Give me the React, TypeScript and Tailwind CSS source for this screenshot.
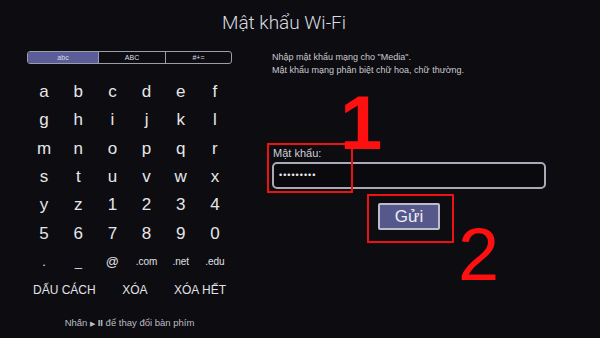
import React from "react";

const rows: string[][] = [
  ["a", "b", "c", "d", "e", "f"],
  ["g", "h", "i", "j", "k", "l"],
  ["m", "n", "o", "p", "q", "r"],
  ["s", "t", "u", "v", "w", "x"],
  ["y", "z", "1", "2", "3", "4"],
  ["5", "6", "7", "8", "9", "0"],
];
const special = [".", "_", "@", ".com", ".net", ".edu"];

export default function App() {
  return (
    <div
      className="relative w-[600px] h-[338px] overflow-hidden bg-[#0c0c11] text-[#e4e4e8]"
      style={{ fontFamily: '"Liberation Sans", Arial, sans-serif' }}
    >
      <div className="h-[51px] pt-[11px] pr-[32px] text-center">
        <div
          className="text-[19px] leading-[24px] font-light text-[#dcdce0]"
          style={{ fontFamily: 'Roboto, "Liberation Sans", sans-serif' }}
        >
          Mật khẩu Wi-Fi
        </div>
      </div>

      <div className="flex">
        {/* Left keyboard column */}
        <div className="ml-[27px] w-[205px] flex flex-col">
          <div className="flex h-[13px] rounded-[3px] border border-[#9c9cab] overflow-hidden text-[7px] leading-[11px] text-[#dedee6]">
            <div className="w-[70px] bg-[#5a5d98] text-center">abc</div>
            <div className="w-[67px] border-l border-[#9c9cab] text-center">ABC</div>
            <div className="flex-1 border-l border-[#9c9cab] text-center">#+=</div>
          </div>

          <div className="mt-[14px] flex flex-col">
            {rows.map((r, i) => (
              <div key={i} className="grid grid-cols-6 h-[28.33px] items-center">
                {r.map((k) => (
                  <div key={k} className="text-center text-[17px] leading-[20px] text-[#e6e6ea]">
                    {k}
                  </div>
                ))}
              </div>
            ))}
            <div className="grid grid-cols-6 h-[28.33px] items-center">
              {special.map((k) => (
                <div
                  key={k}
                  className={
                    k === "@" || k === "." || k === "_"
                      ? "text-center text-[13px] leading-[16px] text-[#e0e0e6]"
                      : "text-center text-[10px] leading-[14px] text-[#e0e0e6]"
                  }
                >
                  {k}
                </div>
              ))}
            </div>
          </div>

          <div className="flex h-[28px] items-center justify-between px-[6px] text-[12px] leading-[14px] text-[#e2e2e8]">
            <span>DẤU CÁCH</span>
            <span>XÓA</span>
            <span>XÓA HẾT</span>
          </div>

          <div className="mt-[13px] text-center text-[9.5px] leading-[12px] text-[#bdbdc4]">
            Nhấn <span className="text-[7px]">▶</span> <span className="font-bold">II</span> để thay đổi bàn phím
          </div>
        </div>

        {/* Right column */}
        <div className="ml-[40px] w-[274px] flex flex-col">
          <div className="text-[9px] leading-[13px] text-[#cacad0]">
            <div>Nhập mật khẩu mạng cho "Media".</div>
            <div>Mật khẩu mạng phân biệt chữ hoa, chữ thường.</div>
          </div>
          <div className="mt-[69px] pl-[1px] text-[11px] leading-[14px] text-[#cfcfd6]">Mật khẩu:</div>
          <div className="mt-[2px] h-[27px] rounded-[5px] border-2 border-[#aaaab6] bg-[#0a0a0e] flex items-center pl-[5px]">
            <span className="text-[9px] tracking-[1px] text-[#ececf0]">•••••••••</span>
          </div>
          <div className="mt-[14px] mx-auto w-[62px] h-[27px] bg-[#56588c] border-2 border-[#bcbccd] rounded-[2px] flex items-center justify-center text-[17px] leading-[20px] text-[#eeeef4]">
            Gửi
          </div>
        </div>
      </div>

      {/* Annotations */}
      <div className="absolute left-[267px] top-[143px] w-[86px] h-[50px] border-2 border-[#ee1111]" />
      <div className="absolute left-[367px] top-[194px] w-[87px] h-[49px] border-2 border-[#ee1111]" />
      <div className="absolute left-[340px] top-[85px] text-[76px] leading-[76px] font-bold text-[#ff1010]">1</div>
      <div className="absolute left-[458px] top-[218px] text-[74px] leading-[74px] text-[#ff1010]">2</div>
    </div>
  );
}
